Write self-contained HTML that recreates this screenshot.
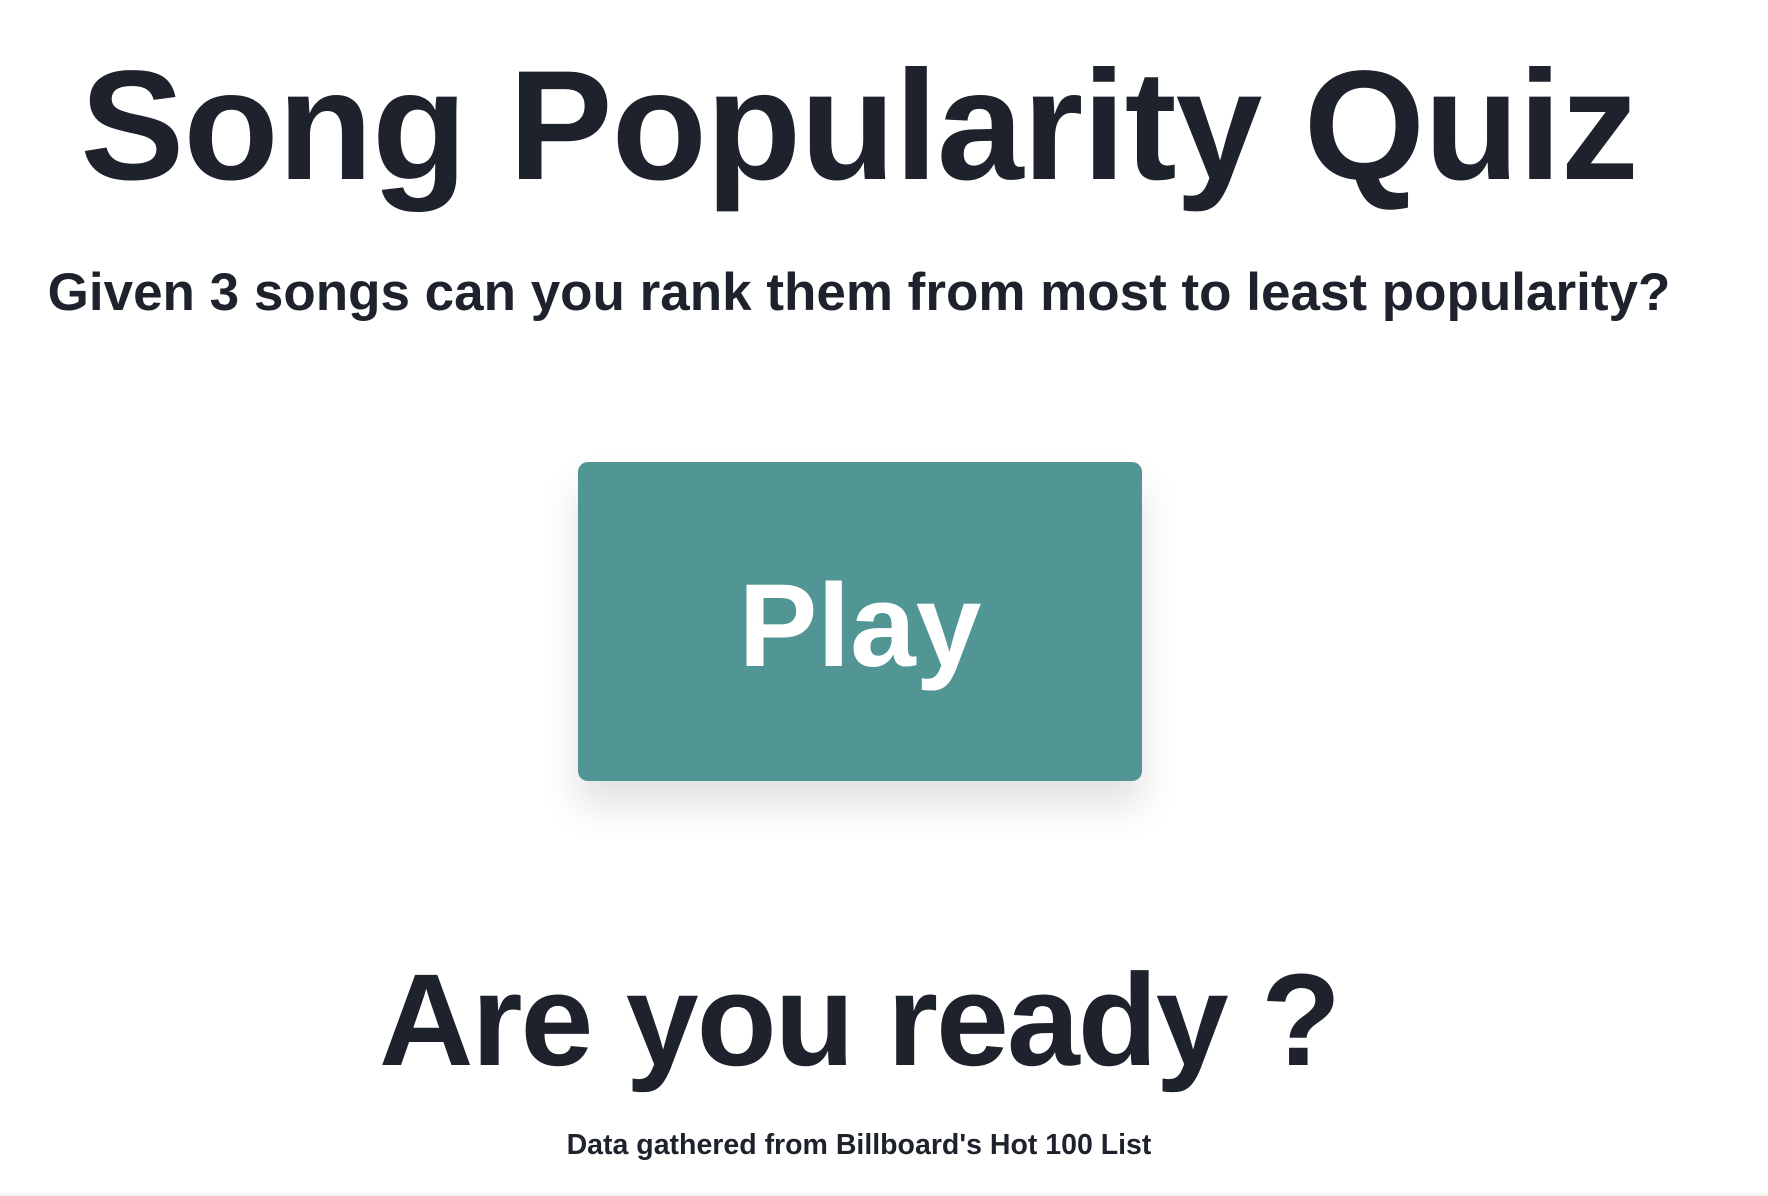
<!DOCTYPE html>
<html><head><meta charset="utf-8"><style>
html,body{margin:0;padding:0;background:#fff;}
body{width:1768px;height:1196px;position:relative;overflow:hidden;font-family:"Liberation Sans",Arial,sans-serif;color:#1e222c;}
.c{position:absolute;left:0;width:1718px;text-align:center;white-space:nowrap;}
#t{top:26px;font-size:156px;font-weight:bold;line-height:200px;letter-spacing:-1px;}
#s{top:258px;font-size:53px;font-weight:bold;line-height:70px;}
#b{position:absolute;left:578px;top:462px;width:564px;height:319px;background:#519694;border-radius:10px;box-shadow:0 25px 40px rgba(0,0,0,0.12);color:#fff;font-size:118px;font-weight:bold;text-align:center;line-height:329px;}
#r{top:935px;font-size:131px;font-weight:bold;line-height:170px;letter-spacing:-2px;}
#f{top:1127px;font-size:28.5px;font-weight:bold;line-height:36px;}
#bot{position:absolute;left:0;right:0;bottom:0;height:4px;background:linear-gradient(#fff,#eee);}
</style></head><body>
<div class="c" id="t">Song Popularity Quiz</div>
<div class="c" id="s">Given 3 songs can you rank them from most to least popularity?</div>
<div id="b">Play</div>
<div class="c" id="r">Are you ready ?</div>
<div class="c" id="f">Data gathered from Billboard's Hot 100 List</div>
<div id="bot"></div>
</body></html>
